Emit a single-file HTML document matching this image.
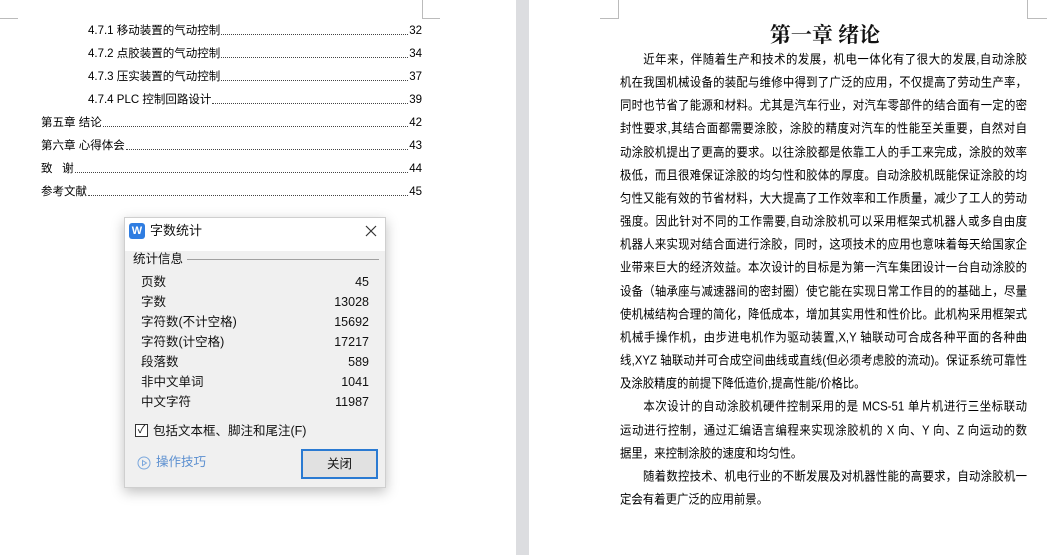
<!DOCTYPE html>
<html><head><meta charset="utf-8"><style>
*{margin:0;padding:0;box-sizing:border-box}
body{width:1056px;height:555px;background:#fff;position:relative;overflow:hidden;font-family:"Liberation Sans","Noto Sans CJK SC",sans-serif;color:#111}
.abs{position:absolute}
.strip{left:516px;top:0;width:13px;height:555px;background:#dcdde0}
.mk{position:absolute;border-color:#bbb;border-style:solid;border-width:0}
.toc{position:absolute;font-size:11.5px;height:16px;line-height:16px;display:flex;white-space:nowrap;color:#000}
.toc .d{flex:1;border-bottom:1px dotted #444;margin:0 1px 4px 1px}
.pg{position:absolute;left:620px;width:407px;font-size:11.4px;line-height:23.16px;top:49px;color:#000}
.pg div{text-align:justify;text-align-last:justify;white-space:nowrap;height:23.16px;transform:scaleY(1.12)}
.pg div.l{text-align-last:left}
.dlg{left:124px;top:217px;width:262px;height:271px;background:#f0f0f0;border:1px solid #cfcfcf;box-shadow:0 4px 12px rgba(0,0,0,.25)}
.row{position:absolute;left:16px;right:16px;font-size:12.5px;line-height:16px;height:16px}
.row b{font-weight:normal;position:absolute;right:0;top:0}
</style></head><body>
<div class="abs strip"></div>
<div class="mk" style="left:0;top:0;width:18px;height:19px;border-bottom-width:1px"></div>
<div class="mk" style="left:422px;top:0;width:18px;height:19px;border-left-width:1px;border-bottom-width:1px"></div>
<div class="mk" style="left:600px;top:0;width:19px;height:19px;border-right-width:1px;border-bottom-width:1px"></div>
<div class="mk" style="left:1027px;top:0;width:20px;height:19px;border-left-width:1px;border-bottom-width:1px"></div>

<div class="toc" style="left:88px;top:23px;width:334px"><span>4.7.1 移动装置的气动控制</span><span class="d"></span><span>32</span></div>
<div class="toc" style="left:88px;top:46px;width:334px"><span>4.7.2 点胶装置的气动控制</span><span class="d"></span><span>34</span></div>
<div class="toc" style="left:88px;top:69px;width:334px"><span>4.7.3 压实装置的气动控制</span><span class="d"></span><span>37</span></div>
<div class="toc" style="left:88px;top:92px;width:334px"><span>4.7.4 PLC 控制回路设计</span><span class="d"></span><span>39</span></div>
<div class="toc" style="left:41px;top:115px;width:381px"><span>第五章 结论</span><span class="d"></span><span>42</span></div>
<div class="toc" style="left:41px;top:138px;width:381px"><span>第六章 心得体会</span><span class="d"></span><span>43</span></div>
<div class="toc" style="left:41px;top:161px;width:381px"><span>致&nbsp;&nbsp;&nbsp;谢</span><span class="d"></span><span>44</span></div>
<div class="toc" style="left:41px;top:184px;width:381px"><span>参考文献</span><span class="d"></span><span>45</span></div>

<div class="abs" style="left:720px;top:21px;width:210px;text-align:center;font-family:'Liberation Serif','Noto Serif CJK SC',serif;font-weight:bold;font-size:21px;line-height:28px">第一章&nbsp;绪论</div>
<div class="pg">
<div>&emsp;&emsp;近年来，伴随着生产和技术的发展，机电一体化有了很大的发展,自动涂胶</div>
<div>机在我国机械设备的装配与维修中得到了广泛的应用，不仅提高了劳动生产率，</div>
<div>同时也节省了能源和材料。尤其是汽车行业，对汽车零部件的结合面有一定的密</div>
<div>封性要求,其结合面都需要涂胶，涂胶的精度对汽车的性能至关重要，自然对自</div>
<div>动涂胶机提出了更高的要求。以往涂胶都是依靠工人的手工来完成，涂胶的效率</div>
<div>极低，而且很难保证涂胶的均匀性和胶体的厚度。自动涂胶机既能保证涂胶的均</div>
<div>匀性又能有效的节省材料，大大提高了工作效率和工作质量，减少了工人的劳动</div>
<div>强度。因此针对不同的工作需要,自动涂胶机可以采用框架式机器人或多自由度</div>
<div>机器人来实现对结合面进行涂胶，同时，这项技术的应用也意味着每天给国家企</div>
<div>业带来巨大的经济效益。本次设计的目标是为第一汽车集团设计一台自动涂胶的</div>
<div>设备（轴承座与减速器间的密封圈）使它能在实现日常工作目的的基础上，尽量</div>
<div>使机械结构合理的简化，降低成本，增加其实用性和性价比。此机构采用框架式</div>
<div>机械手操作机，由步进电机作为驱动装置,X,Y 轴联动可合成各种平面的各种曲</div>
<div>线,XYZ 轴联动并可合成空间曲线或直线(但必须考虑胶的流动)。保证系统可靠性</div>
<div class="l">及涂胶精度的前提下降低造价,提高性能/价格比。</div>
<div>&emsp;&emsp;本次设计的自动涂胶机硬件控制采用的是 MCS-51 单片机进行三坐标联动</div>
<div>运动进行控制，通过汇编语言编程来实现涂胶机的 X 向、Y 向、Z 向运动的数</div>
<div class="l">据里，来控制涂胶的速度和均匀性。</div>
<div>&emsp;&emsp;随着数控技术、机电行业的不断发展及对机器性能的高要求，自动涂胶机一</div>
<div class="l">定会有着更广泛的应用前景。</div>
</div>

<div class="abs dlg">
 <div class="abs" style="left:0;top:0;width:260px;height:33px;background:#fff"></div>
 <div class="abs" style="left:4px;top:5px;width:16px;height:16px;background:#2f7de1;border-radius:3px;color:#fff;font-size:11px;font-weight:bold;text-align:center;line-height:16px">W</div>
 <div class="abs" style="left:25px;top:4px;font-size:13px;line-height:18px">字数统计</div>
 <svg class="abs" style="left:240px;top:7px" width="12" height="12" viewBox="0 0 12 12"><path d="M1 1L11 11M11 1L1 11" stroke="#333" stroke-width="1.2"/></svg>
 <div class="abs" style="left:8px;top:33px;font-size:12.5px;line-height:16px">统计信息</div>
 <div class="abs" style="left:62px;top:41px;width:192px;height:1px;background:#a0a0a0"></div>
 <div class="row" style="top:56px">页数<b>45</b></div>
 <div class="row" style="top:76px">字数<b>13028</b></div>
 <div class="row" style="top:96px">字符数(不计空格)<b>15692</b></div>
 <div class="row" style="top:116px">字符数(计空格)<b>17217</b></div>
 <div class="row" style="top:136px">段落数<b>589</b></div>
 <div class="row" style="top:156px">非中文单词<b>1041</b></div>
 <div class="row" style="top:176px">中文字符<b>11987</b></div>
 <div class="abs" style="left:10px;top:206px;width:13px;height:13px;border:1px solid #333;background:#fff;font-size:11px;line-height:11px;text-align:center">✓</div>
 <div class="abs" style="left:28px;top:205px;font-size:12.5px;line-height:16px">包括文本框、脚注和尾注(F)</div>
 <svg class="abs" style="left:12px;top:238px" width="14" height="14" viewBox="0 0 14 14"><circle cx="7" cy="7" r="6" fill="none" stroke="#7aa7dd"/><path d="M5.5 4.5L9.5 7L5.5 9.5Z" fill="none" stroke="#7aa7dd"/></svg>
 <div class="abs" style="left:31px;top:236px;font-size:12.5px;line-height:16px;color:#5b8fd0">操作技巧</div>
 <div class="abs" style="left:176px;top:231px;width:77px;height:30px;border:2px solid #2a7ad2;background:#e1e1e1;font-size:12.5px;text-align:center;line-height:26px">关闭</div>
</div>
</body></html>
